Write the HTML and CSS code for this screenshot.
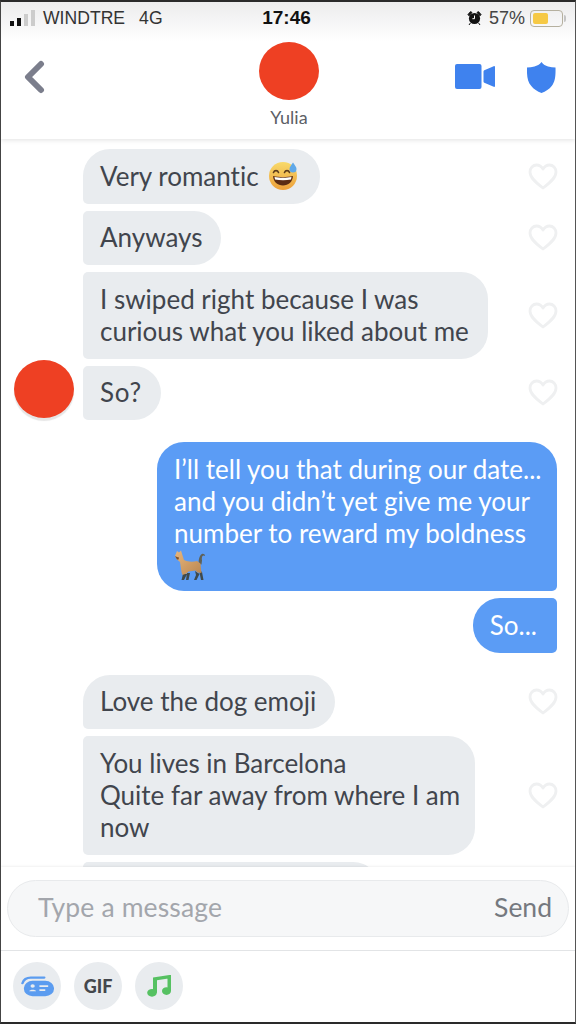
FILE: index.html
```html
<!DOCTYPE html>
<html lang="en">
<head>
    <meta charset="UTF-8">
    <meta name="viewport" content="width=device-width, initial-scale=1.0">
    <title>Yulia</title>
    <link rel="stylesheet" href="styles.css">
</head>
<body>
    <div class="phone">
        <header class="top">
            <div class="status">
                <div class="status-left">
                    <span class="signal"><i class="on s1"></i><i class="on s2"></i><i class="s3"></i><i class="s4"></i></span>
                    <span class="carrier">WINDTRE</span>
                    <span class="net">4G</span>
                </div>
                <div class="clock">17:46</div>
                <div class="status-right">
                    <svg class="alarm" width="15" height="16" viewBox="0 0 15 16">
                        <circle cx="7.5" cy="8.5" r="5.6" fill="#111"/>
                        <path d="M1 4.5 3.6 1.6 5 2.6 2 5.8ZM14 4.5 11.4 1.6 10 2.6 13 5.8ZM3.4 13 2 15M11.6 13 13 15" fill="#111" stroke="#111"/>
                        <path d="M7.5 5.5v3.2H5.4" fill="none" stroke="#fff"/>
                    </svg>
                    <span class="percent">57%</span>
                    <span class="battery"><i></i></span>
                </div>
            </div>
            <nav class="bar">
                <svg class="back" width="22" height="34" viewBox="0 0 22 34">
                    <path d="M18 4 5 17l13 13" fill="none" stroke="#7b7e8c" stroke-width="6" stroke-linecap="round" stroke-linejoin="round"/>
                </svg>
                <div class="match">
                    <span class="avatar big"></span>
                    <span class="name">Yulia</span>
                </div>
                <div class="actions">
                    <svg width="41" height="26" viewBox="0 0 41 26">
                        <rect x="0" y="0" width="26.500" height="25" rx="2" fill="#3f82ee"/>
                        <path d="M28.500 7.500c0-.6.300-1 .8-1.300l9.400-4c.8-.3 1.300.1 1.300.9v18.800c0 .8-.5 1.200-1.300.9l-9.400-4c-.5-.2-.8-.7-.8-1.300Z" fill="#3f82ee"/>
                    </svg>
                    <svg class="shield" width="29" height="31" viewBox="0 0 29 31">
                        <path d="M14.500 0c1.800 2.500 4 3.800 6.500 4.400 2.500.6 5 .9 7.500 1 .3 9-.6 14.500-3.800 18.600-2.300 3-6 5.600-10.200 7-4.200-1.400-7.900-4-10.200-7C.6 19.900-.3 14.400 0 5.400c2.500-.1 5-.4 7.500-1C10 3.800 12.700 2.500 14.500 0Z" fill="#3f82ee"/>
                    </svg>
                </div>
            </nav>
        </header>

        <main class="chat">
            <div class="row">
                <p class="bubble first">Very romantic
                    <svg class="emoji" width="30" height="30" viewBox="0 0 30 30">
                        <defs>
                            <linearGradient id="face" x1="0" y1="0" x2="0" y2="1">
                                <stop offset="0" stop-color="#f8da6a"/>
                                <stop offset="1" stop-color="#eda03a"/>
                            </linearGradient>
                        </defs>
                        <circle cx="15" cy="15" r="14" fill="url(#face)"/>
                        <path d="M5.500 11.500c1-2.500 4-2.500 5 0M16.500 11.500c1-2.500 4-2.500 5 0" fill="none" stroke="#5b3a1a" stroke-width="1.600" stroke-linecap="round"/>
                        <path d="M5 15c6 1.500 14 1.500 20 0-.5 6-4.500 9.500-10 9.500S5.500 21 5 15Z" fill="#5b2c14"/>
                        <path d="M6.500 16c5 1 12 1 17 0l-.5 2.500c-5 1-11 1-16 0Z" fill="#fff"/>
                        <path d="M25 1.500c-2 3-3.500 4.500-3.500 6.500a3.500 3.500 0 0 0 7 0c0-2-1.500-3.500-3.500-6.500Z" fill="#5fa8e8"/>
                    </svg>
                </p>
                <svg class="heart" viewBox="0 0 30 27"><use href="#heart-shape"/></svg>
            </div>
            <div class="row">
                <p class="bubble">Anyways</p>
                <svg class="heart" viewBox="0 0 30 27"><use href="#heart-shape"/></svg>
            </div>
            <div class="row">
                <p class="bubble">I swiped right because I was<br>curious what you liked about me</p>
                <svg class="heart" viewBox="0 0 30 27"><use href="#heart-shape"/></svg>
            </div>
            <div class="row">
                <span class="avatar small"></span>
                <p class="bubble so">So?</p>
                <svg class="heart" viewBox="0 0 30 27"><use href="#heart-shape"/></svg>
            </div>

            <div class="row mine gap-big">
                <p class="bubble blue wide">I’ll tell you that during our date...<br>and you didn’t yet give me your<br>number to reward my boldness<br>
                    <svg class="emoji dog" width="32" height="32" viewBox="0 0 32 32">
                        <defs>
                            <linearGradient id="fur" x1="0" y1="0" x2="1" y2="1">
                                <stop offset="0" stop-color="#e8b67c"/>
                                <stop offset="1" stop-color="#b98650"/>
                            </linearGradient>
                        </defs>
                        <path d="M25 15c-1-3 .5-9 3-10 1.500-.5 3 .5 3 2l-1.500-.5c-1.500 0-2 3-1.500 5l-.5 4Z" fill="#5f6157"/>
                        <path d="M9 25 7.500 31H10l3-6ZM13 24l-1 7h2.500l1.500-7ZM21 22l1 4-2 5h2.500l3-6ZM25 21l1 5 1 5h2.500L28 23Z" fill="#3f4a4c"/>
                        <path d="M1 7 3 2l2 1.500L7 1.500 9 8l1 3c4 2 9 2 13 1l3.500 2.500.5 5.500.5 4-4-.5-2-2-7 1-2 2-4 1.500-1-3L6 13 3 10.500Z" fill="url(#fur)"/>
                        <path d="M1 7 3 8l2 .5-.5 2-1.500 0Z" fill="#7a4f2a"/>
                    </svg>
                </p>
            </div>
            <div class="row mine">
                <p class="bubble blue tight">So...</p>
            </div>

            <div class="row gap-big">
                <p class="bubble first">Love the dog emoji</p>
                <svg class="heart" viewBox="0 0 30 27"><use href="#heart-shape"/></svg>
            </div>
            <div class="row">
                <p class="bubble far">You lives in Barcelona<br>Quite far away from where I am<br>now</p>
                <svg class="heart" viewBox="0 0 30 27"><use href="#heart-shape"/></svg>
            </div>
            <div class="row">
                <p class="bubble cut">&nbsp;</p>
            </div>
        </main>

        <footer class="bottom">
            <div class="composer">
                <form class="pill">
                    <span class="placeholder">Type a message</span>
                    <span class="send">Send</span>
                </form>
            </div>
            <div class="tools">
                <span class="tool">
                    <svg width="33" height="21" viewBox="0 0 34 26" preserveAspectRatio="none">
                        <path d="M1.500 9C3 3.500 6 2 10 2h14" fill="none" stroke="#5b9cf0" stroke-width="2.500" stroke-linecap="round"/>
                        <rect x="3" y="6" width="31" height="19" rx="9" fill="#5b9cf0"/>
                        <circle cx="12" cy="12.500" r="2.200" fill="#e9ecef"/>
                        <path d="M8.500 19c.3-2.500 6.700-2.500 7 0Z" fill="#e9ecef"/>
                        <path d="M19 12.500h9M19 17.500h6" stroke="#e9ecef" stroke-width="2"/>
                    </svg>
                </span>
                <span class="tool gif">GIF</span>
                <span class="tool">
                    <svg width="24" height="22" viewBox="0 0 24 26" preserveAspectRatio="none">
                        <path d="M8 21V4.500L22.500 2v17" fill="none" stroke="#56c162" stroke-width="4"/>
                        <ellipse cx="5" cy="21" rx="4.800" ry="4.600" fill="#56c162"/>
                        <ellipse cx="19.500" cy="19" rx="4.500" ry="4.600" fill="#56c162"/>
                    </svg>
                </span>
            </div>
        </footer>
    </div>

    <svg class="defs" width="0" height="0">
        <symbol id="heart-shape" viewBox="0 0 30 27">
            <path d="M15 25C7 19 2 14.500 2 9c0-4 3-7 6.500-7 2.800 0 5 1.500 6.500 4 1.500-2.500 3.700-4 6.500-4C25 2 28 5 28 9c0 5.500-5 10-13 16Z" fill="#fff" stroke="#eff0f1" stroke-width="2.800" stroke-linejoin="round"/>
        </symbol>
    </svg>
</body>
</html>
```

FILE: styles.css
```css
* {
    box-sizing: border-box;
}

body {
    margin: 0;
    background: #333;
    font-family: Lato, "Liberation Sans", sans-serif;
    font-variant-ligatures: none;
}

.defs {
    display: block;
    height: 0;
}

.phone {
    width: 576px;
    height: 1024px;
    background: #fff;
    border-top: 2px solid #2a2a2a;
    border-left: 1px solid #444;
    border-right: 1px solid #555;
    border-bottom: 2px solid #2a2a2a;
    display: flex;
    flex-direction: column;
    overflow: hidden;
}

/* header */

.top {
    height: 137px;
    flex-shrink: 0;
    background: linear-gradient(#ececed, #fff 40px);
    box-shadow: 0 1px 5px rgba(0, 0, 0, 0.12);
    position: relative;
    z-index: 2;
}

.status {
    height: 32px;
    padding: 0 12px 0 9px;
    display: grid;
    grid-template-columns: 1fr auto 1fr;
    align-items: center;
    font-size: 17.6px;
    color: #333;
    font-family: "Liberation Sans", sans-serif;
}

.status-left {
    display: flex;
    align-items: center;
}

.signal {
    display: flex;
    align-items: flex-end;
    gap: 3px;
    height: 16px;
    margin-right: 8px;

    i {
        width: 4px;
        background: #ccc;
    }

    .on {
        background: #111;
    }

    .s1 { height: 5px; }
    .s2 { height: 8px; }
    .s3 { height: 12px; }
    .s4 { height: 16px; }
}

.net {
    margin-left: 14px;
}

.clock {
    font-weight: 700;
    font-size: 19px;
    color: #111;
}

.status-right {
    display: flex;
    align-items: center;
    justify-content: flex-end;
}

.percent {
    margin-left: 7px;
    font-size: 18px;
    color: #444;
}

.battery {
    width: 33px;
    height: 17px;
    margin-left: 5px;
    padding: 2px;
    border: 1px solid #b5b09f;
    border-radius: 4px;
    display: block;
    position: relative;

    i {
        display: block;
        width: 55%;
        height: 100%;
        background: #f6c945;
        border-radius: 2px;
    }

    &::after {
        content: "";
        position: absolute;
        right: -4px;
        top: 4px;
        width: 2px;
        height: 7px;
        background: #c4c4c4;
        border-radius: 0 2px 2px 0;
    }
}

.bar {
    height: 105px;
    display: flex;
    justify-content: space-between;
    padding: 0 19px 0 22px;
    position: relative;
}

.back {
    margin-top: 26px;
}

.match {
    position: absolute;
    left: 258px;
    top: 8px;
    width: 60px;
    display: flex;
    flex-direction: column;
    align-items: center;
}

.name {
    margin-top: 6px;
    font-size: 18px;
    color: #5c6066;
}

.actions {
    display: flex;
    gap: 31px;
    margin-top: 30px;
    align-items: flex-start;
}

.shield {
    margin-top: -2px;
}

.avatar {
    display: block;
    border-radius: 50%;
    background: #ee4023;
    flex-shrink: 0;
}

.avatar.big {
    width: 60px;
    height: 58px;
}

.avatar.small {
    width: 60px;
    height: 58px;
    box-shadow: 0 3px 1px #e6e6e6;
    position: absolute;
    left: -69px;
    top: -6px;
}

/* messages */

.chat {
    flex: 1;
    min-height: 0;
    overflow: hidden;
    padding: 10px 18px 0 82px;
    display: flex;
    flex-direction: column;
    gap: 7px;
    background: #fff;
}

.row {
    display: flex;
    align-items: center;
    justify-content: space-between;
    flex-shrink: 0;
    position: relative;
}

.row.mine {
    justify-content: flex-end;
}

.gap-big {
    margin-top: 15px;
}

.bubble {
    margin: 0;
    padding: 10.500px 19px 12px 17px;
    font-size: 26px;
    line-height: 32px;
    color: #41454d;
    background: #e9ecef;
    border-radius: 5px 27px 27px 5px;
}

.bubble.first {
    border-top-left-radius: 27px;
}

.bubble.so {
    letter-spacing: .8px;
}

.bubble.far {
    padding-right: 15px;
}

.bubble.blue {
    color: #fff;
    background: #5b9cf5;
    padding-bottom: 10.500px;
    border-radius: 27px 27px 5px 27px;
}

.bubble.wide {
    width: 400px;
    padding-right: 0;
    white-space: nowrap;
}

.bubble.tight {
    padding-right: 20px;
    padding-bottom: 12px;
    border-radius: 27px 5px 5px 27px;
}

.bubble.cut {
    width: 297px;
}

.emoji {
    vertical-align: -5px;
    margin: 0 3px 0 3px;
}

.emoji.dog {
    display: block;
    margin: 0;
}

.heart {
    width: 30px;
    height: 27px;
    flex-shrink: 0;
    margin-right: -1px;
}

/* bottom */

.bottom {
    flex-shrink: 0;
    height: 155px;
    background: #fff;
    position: relative;
    box-shadow: 0 -1px 2px rgba(0, 0, 0, 0.06);
}

.composer {
    height: 84px;
    padding: 13px 6px 0 6px;
    border-bottom: 1px solid #e2e4e6;
}

.pill {
    height: 57px;
    padding: 0 16px 3px 30px;
    display: flex;
    align-items: center;
    justify-content: space-between;
    background: #f6f7f8;
    border: 1px solid #e8eaec;
    border-radius: 29px;
    font-size: 26.500px;
}

.placeholder {
    color: #a3a6ac;
    letter-spacing: .15px;
}

.send {
    color: #75797f;
}

.tools {
    display: flex;
    gap: 13px;
    padding: 11px 0 0 12px;
}

.tool {
    width: 48px;
    height: 48px;
    border-radius: 50%;
    background: #e9ecef;
    display: flex;
    align-items: center;
    justify-content: center;
}

.gif {
    font-size: 18px;
    font-weight: 900;
    color: #44474c;
}
```
